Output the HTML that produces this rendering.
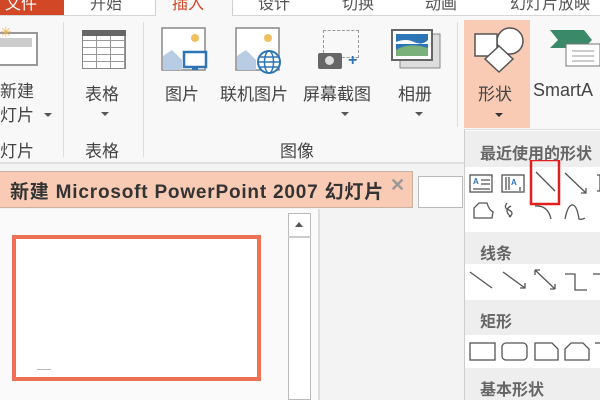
<!DOCTYPE html>
<html><head><meta charset="utf-8"><style>
*{margin:0;padding:0;box-sizing:border-box}
body{width:600px;height:400px;overflow:hidden;background:#f3f3f3;font-family:"Liberation Sans","Noto Sans CJK SC",sans-serif;position:relative;color:#444}
.a{position:absolute}
.t{font-size:17px;color:#444;white-space:nowrap}
.tab{position:absolute;top:-10px;font-size:16px;color:#555;white-space:nowrap}
.arr{width:0;height:0;border-left:4px solid transparent;border-right:4px solid transparent;border-top:4px solid #555;position:absolute}
</style></head><body>
<!-- tab bar -->
<div class="a" style="left:0;top:0;width:600px;height:16px;background:#fff;border-bottom:1px solid #d6d6d6"></div>
<div class="a" style="left:0;top:0;width:64px;height:15px;background:#d24726"></div>
<div class="a" style="left:155px;top:0;width:78px;height:17px;background:#f8f8f8;border:1px solid #d0d0d0;border-top:none;border-bottom:none"></div>
<div class="tab" style="left:5px;color:#fff">文件</div>
<div class="tab" style="left:90px">开始</div>
<div class="tab" style="left:172px;color:#d24726">插入</div>
<div class="tab" style="left:258px">设计</div>
<div class="tab" style="left:342px">切换</div>
<div class="tab" style="left:425px">动画</div>
<div class="tab" style="left:510px">幻灯片放映</div>
<!-- ribbon -->
<div class="a" style="left:0;top:16px;width:600px;height:148px;background:#f8f8f8;border-bottom:2px solid #e0e0e0"></div>
<div class="a" style="left:63px;top:22px;width:1px;height:135px;background:#ddd"></div>
<div class="a" style="left:143px;top:22px;width:1px;height:135px;background:#ddd"></div>
<div class="a" style="left:457px;top:22px;width:1px;height:105px;background:#ddd"></div>
<!-- new slide icon -->
<div class="a" style="left:0;top:32px;width:38px;height:34px;border:2px solid #999;border-left:none;background:#fff"></div>
<div class="a" style="left:0;top:38px;width:32px;height:9px;background:#ccc"></div>
<div class="a" style="left:0;top:24px;color:#f0b040;font-size:14px">✳</div>
<div class="a t" style="left:0;top:77px">新建</div>
<div class="a t" style="left:0;top:101px">灯片</div>
<div class="arr" style="left:44px;top:113px"></div>
<div class="a t" style="left:0;top:137px">灯片</div>
<!-- table icon -->
<div class="a" style="left:82px;top:30px;width:44px;height:39px;border:1px solid #888;background:repeating-linear-gradient(90deg,transparent 0 13px,#999 13px 14px),repeating-linear-gradient(0deg,#fff 0 6px,#999 6px 7px)"></div>
<div class="a" style="left:82px;top:30px;width:44px;height:6px;background:#666"></div>
<div class="a t" style="left:85px;top:80px">表格</div>
<div class="arr" style="left:101px;top:112px"></div>
<div class="a t" style="left:85px;top:137px">表格</div>
<!-- picture icons -->
<svg class="a" style="left:160px;top:26px" width="150" height="52">
<rect x="2" y="2" width="43" height="42" fill="#fff" stroke="#888" stroke-width="1.5"/><circle cx="35" cy="12" r="4" fill="#f0c060"/><path d="M3 44 L3 30 L12 24 L22 34 L22 44Z" fill="#b8cde3"/>
<rect x="24" y="26" width="22" height="15" fill="#fff" stroke="#2e75b6" stroke-width="2.5"/><path d="M32 43 h6" stroke="#2e75b6" stroke-width="2"/>
<rect x="76" y="2" width="43" height="42" fill="#fff" stroke="#888" stroke-width="1.5"/><circle cx="108" cy="12" r="4" fill="#f0c060"/><path d="M77 44 L77 30 L86 24 L96 34 L96 44Z" fill="#b8cde3"/>
<circle cx="109" cy="36" r="11" fill="#fff" stroke="#2e75b6" stroke-width="2"/><ellipse cx="109" cy="36" rx="4.5" ry="11" fill="none" stroke="#2e75b6" stroke-width="1.5"/><path d="M98 36h22M100 31h18M100 41h18" stroke="#2e75b6" stroke-width="1.5"/>
</svg>
<div class="a t" style="left:165px;top:80px">图片</div>
<div class="a t" style="left:220px;top:80px">联机图片</div>
<div class="a t" style="left:280px;top:137px">图像</div>
<!-- screenshot -->
<div class="a" style="left:323px;top:30px;width:36px;height:28px;border:1px dashed #999"></div>
<div class="a" style="left:318px;top:53px;width:24px;height:16px;background:#666;border-radius:2px"></div>
<div class="a" style="left:325px;top:56px;width:9px;height:9px;border-radius:50%;background:#ddd"></div>
<div class="a" style="left:348px;top:52px;color:#2e75b6;font-size:16px;font-weight:bold">+</div>
<div class="a t" style="left:303px;top:80px">屏幕截图</div>
<div class="arr" style="left:341px;top:112px"></div>
<!-- album -->
<svg class="a" style="left:390px;top:28px" width="52" height="42"><rect x="10" y="6" width="40" height="34" fill="#ddd" stroke="#888"/><rect x="2" y="2" width="40" height="30" fill="#fff" stroke="#666" stroke-width="2"/><rect x="6" y="6" width="32" height="22" fill="#2e75b6"/><path d="M6 22 Q18 14 38 20 V28 H6Z" fill="#7ab07a"/><path d="M6 14 Q16 10 24 14 T38 12 V16 H6Z" fill="#fff"/></svg>
<div class="a t" style="left:398px;top:80px">相册</div>
<div class="arr" style="left:415px;top:112px"></div>
<!-- shapes button -->
<div class="a" style="left:464px;top:20px;width:66px;height:108px;background:#f9cbb5"></div>
<svg class="a" style="left:470px;top:24px" width="56" height="50"><circle cx="40" cy="17" r="13" fill="#fff" stroke="#555" stroke-width="1.5"/><rect x="5" y="10" width="22" height="22" fill="#fff" stroke="#555" stroke-width="1.5"/><path d="M29 22 L43 35 L29 48 L15 35Z" fill="#fff" stroke="#555" stroke-width="1.5"/></svg>
<div class="a t" style="left:478px;top:80px">形状</div>
<div class="arr" style="left:495px;top:113px;border-top-color:#333"></div>
<svg class="a" style="left:548px;top:28px" width="52" height="40"><path d="M2 2 H36 L44 12 L36 20 H2 L10 12Z" fill="#3a8a6a"/><rect x="18" y="16" width="34" height="22" fill="#fff" stroke="#777"/><path d="M24 23h22M24 28h22M24 33h22" stroke="#999"/></svg>
<div class="a t" style="left:533px;top:80px;font-size:18px">SmartA</div>
<!-- document tab -->
<div class="a" style="left:0;top:171px;width:413px;height:37px;background:#f9cbb5;border:1px solid #c8b0a0;border-left:none"></div>
<div class="a" style="left:10px;top:177px;font-size:19px;letter-spacing:0.8px;font-weight:bold;color:#333;white-space:nowrap">新建 Microsoft PowerPoint 2007 幻灯片</div>
<div class="a" style="left:390px;top:175px;font-size:18px;color:#999;font-weight:bold">✕</div>
<div class="a" style="left:418px;top:176px;width:45px;height:32px;background:#fff;border:1px solid #bbb"></div>
<!-- content -->
<div class="a" style="left:0;top:209px;width:318px;height:191px;background:#fafafa"></div>
<div class="a" style="left:318px;top:209px;width:2px;height:191px;background:#ddd"></div>
<div class="a" style="left:12px;top:235px;width:249px;height:146px;background:#fff;border:4px solid #ee7155"></div>
<div class="a" style="left:37px;top:369px;width:14px;height:1px;background:#bbb"></div>
<div class="a" style="left:288px;top:213px;width:23px;height:187px;background:#fff;border:1px solid #bbb"></div>
<div class="a" style="left:288px;top:236px;width:23px;height:2px;background:#ccc"></div>
<div class="arr" style="left:295px;top:222px;border-top:none;border-bottom:5px solid #555"></div>
<!-- dropdown -->
<div class="a" style="left:464px;top:129px;width:136px;height:271px;background:#fff;border-left:1px solid #ccc;border-top:1px solid #ddd"></div>
<div class="a" style="left:465px;top:131px;width:135px;height:36px;background:#eee"></div>
<div class="a" style="left:480px;top:140px;font-size:16px;font-weight:bold;color:#666;white-space:nowrap">最近使用的形状</div>
<div class="a" style="left:465px;top:232px;width:135px;height:32px;background:#eee"></div>
<div class="a" style="left:480px;top:240px;font-size:16px;font-weight:bold;color:#666">线条</div>
<div class="a" style="left:465px;top:300px;width:135px;height:35px;background:#eee"></div>
<div class="a" style="left:480px;top:308px;font-size:16px;font-weight:bold;color:#666">矩形</div>
<div class="a" style="left:465px;top:368px;width:135px;height:32px;background:#eee"></div>
<div class="a" style="left:480px;top:376px;font-size:16px;font-weight:bold;color:#666">基本形状</div>
<svg class="a" style="left:465px;top:160px" width="135" height="240" fill="none" stroke="#555" stroke-width="1.3">
<rect x="5" y="15" width="22" height="17"/><text x="8" y="24" font-size="8" fill="#2e75b6" stroke="none" font-weight="bold">A</text><path d="M16 20h9M16 24h9M8 29h17"/>
<rect x="37" y="15" width="22" height="17"/><text x="46" y="25" font-size="8" fill="#2e75b6" stroke="none" font-weight="bold">A</text><path d="M41 17v13M44 17v13M55 27v4"/>
<rect x="66" y="0" width="28" height="44" stroke="#e02020" stroke-width="2.5"/>
<path d="M71 12 L90 31"/><path d="M100 13 L121 33M121 28v5h-5"/><path d="M132 15h3v16h-3"/>
<path d="M9 58 L9 48 L14 43 L22 43 Q24 50 28 52 L27 58Z"/><path d="M42 43 Q38 48 44 50 Q50 53 44 57 M46 46 Q38 50 46 57"/><path d="M70 46 Q83 45 86 59"/><path d="M100 59 Q103 44 108 45 Q112 46 114 59 Q117 60 120 58"/>
<path d="M5 112 L27 128"/><path d="M38 112 L60 128M60 123v5h-5"/><path d="M70 110 L90 129M70 110h5M70 110v5M90 129h-5M90 129v-5"/><path d="M100 114h10v16h12"/><path d="M128 114h7"/>
<rect x="5" y="183" width="25" height="17"/><rect x="37" y="183" width="25" height="17" rx="4"/><path d="M70 183h17l6 6v11h-23z"/><path d="M100 200v-11l6-6h12l6 6v11z"/><path d="M130 183h5"/>
</svg>
</body></html>
